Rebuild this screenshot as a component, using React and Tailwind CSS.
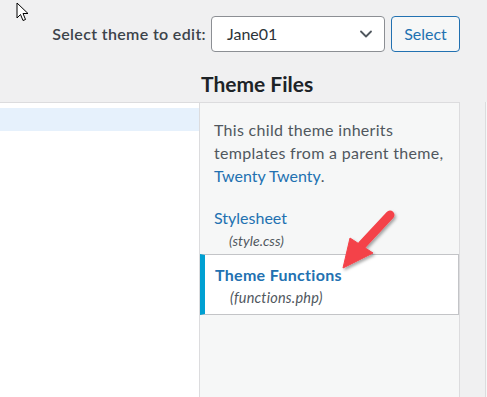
import { ChevronDown } from "lucide-react";

function Cursor() {
  return (
    <svg width="13" height="20" viewBox="0 0 13 20" className="absolute left-[16px] top-[2px]">
      <path d="M1 1 L1 16 L4.5 12.5 L7 18.5 L9.5 17.5 L7 11.5 L12 11.5 Z" fill="#fff" stroke="#000" strokeWidth="1" strokeLinejoin="round" />
    </svg>
  );
}

function RedArrow() {
  return (
    <svg width="80" height="80" viewBox="0 0 80 80" className="absolute left-[330px] top-[200px] pointer-events-none">
      <defs>
        <filter id="sh" x="-30%" y="-30%" width="160%" height="160%">
          <feDropShadow dx="1.5" dy="2" stdDeviation="1.5" floodColor="#000" floodOpacity="0.35" />
        </filter>
      </defs>
      <g filter="url(#sh)" fill="#f4424a" stroke="#f4424a">
        <line x1="60" y1="15" x2="32" y2="45" strokeWidth="9" strokeLinecap="round" />
        <path d="M13 68 L20 38 L43 53 Z" strokeWidth="1" strokeLinejoin="round" />
      </g>
    </svg>
  );
}

export default function App() {
  return (
    <div className="relative w-[487px] h-[397px] overflow-hidden bg-[#f0f0f1] font-['Lato',sans-serif] text-[#3c434a]">
      <Cursor />

      {/* top row */}
      <div className="flex items-center justify-end h-[36px] mt-[16px] w-[460px]">
        <label className="text-[16px] tracking-[0.35px] font-semibold text-[#3c434a] mr-[5px]">Select theme to edit:</label>
        <div className="flex items-center justify-between w-[174px] h-[36px] bg-white border border-[#8c8f94] rounded-[4px] pl-[15px] pr-[8px] text-[16px] text-[#2c3338]">
          <span>Jane01</span>
          <ChevronDown size={20} strokeWidth={2.2} className="text-[#50575e]" />
        </div>
        <button className="ml-[6px] w-[69px] h-[36px] bg-[#f6f7f7] border border-[#2271b1] rounded-[4px] text-[16px] text-[#2271b1]">
          Select
        </button>
      </div>

      <h2 className="ml-[201px] mt-[18px] h-[32px] text-[21px] leading-[27px] font-bold text-[#1d2327]">Theme Files</h2>

      <div className="flex h-[400px]">
        <div className="w-[200px] bg-white border-t border-r border-[#dcdcde] pt-[5px]">
          <div className="h-[23px] bg-[#e6f1fc]"></div>
        </div>
        <div className="w-[260px] bg-[#f6f7f7] border-t border-r border-[#dcdcde] pt-[15px]">
          <p className="pl-[14px] pr-[6px] text-[16px] tracking-[0.3px] leading-[23px] text-[#50575e]">
            This child theme inherits templates from a parent theme,{" "}
            <span className="text-[#2271b1] tracking-normal">Twenty Twenty</span>.
          </p>
          <div className="mt-[19px] pl-[14px]">
            <div className="text-[16px] leading-[23px] text-[#2271b1]">Stylesheet</div>
            <div className="pl-[15px] text-[14px] leading-[23px] italic text-[#50575e]">(style.css)</div>
          </div>
          <div className="mt-[2px] h-[61px] bg-white border-y border-r border-[#c3c4c7] border-l-[5px] border-l-[#00a0d2] pl-[10px] pt-[8px]">
            <div className="text-[16px] tracking-[0.3px] leading-[23px] font-bold text-[#2271b1]">Theme Functions</div>
            <div className="pl-[15px] text-[14.5px] tracking-[0.2px] leading-[23px] italic text-[#50575e]">(functions.php)</div>
          </div>
        </div>
        <div className="w-[25px]"></div>
        <div className="w-[1px] bg-[#dcdcde]"></div>
        <div className="flex-1 bg-[#f6f7f7]"></div>
      </div>

      <RedArrow />
    </div>
  );
}
